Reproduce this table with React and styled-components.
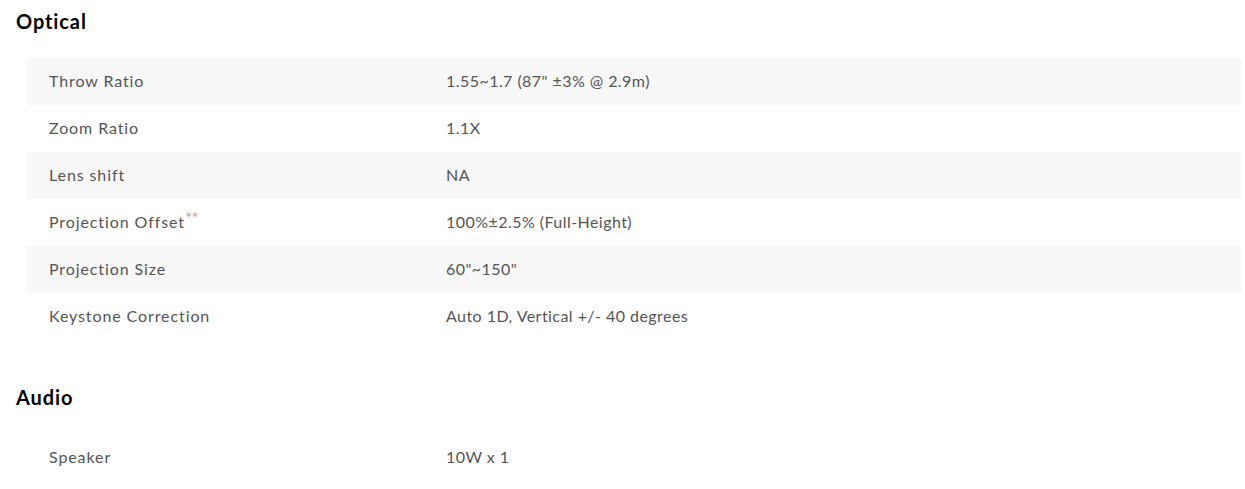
import React from 'react'
import styled, { createGlobalStyle } from 'styled-components'

const GlobalStyle = createGlobalStyle`
  html, body {
    margin: 0;
    padding: 0;
    background: #fff;
  }
  body {
    font-family: Lato, "Open Sans", "Liberation Sans", sans-serif;
  }
`

const Page = styled.div`
  padding: 8px 4px 0 16px;
`

const Section = styled.section`
  & + & {
    margin-top: 44px;
  }
`

const Heading = styled.h3`
  margin: 0 0 24px;
  font-size: 20px;
  line-height: 26px;
  font-weight: 700;
  color: #000;
  letter-spacing: 0.9px;
`

const SpecTable = styled.div`
  margin-left: 11px;
  display: flex;
  flex-direction: column;
`

const Row = styled.div`
  display: grid;
  grid-template-columns: 397px 1fr;
  height: 47px;
  align-items: center;
  padding: 0 0 3px 22px;
  box-sizing: border-box;
  background: ${p => (p.$shaded ? '#f8f8f8' : '#fff')};
  color: #555;
  font-size: 16px;
`

const Label = styled.div`
  letter-spacing: 0.9px;
`

const Value = styled.div`
  letter-spacing: 0.45px;
`

const Mark = styled.span`
  color: #b0b0b0;
  font-size: 17px;
  position: relative;
  top: -3px;
  letter-spacing: -1px;
`

const optical = [
  ['Throw Ratio', '1.55~1.7 (87" ±3% @ 2.9m)'],
  ['Zoom Ratio', '1.1X'],
  ['Lens shift', 'NA'],
  ['Projection Offset', '100%±2.5% (Full-Height)', '**'],
  ['Projection Size', '60"~150"'],
  ['Keystone Correction', 'Auto 1D, Vertical +/- 40 degrees'],
]

const audio = [['Speaker', '10W x 1']]

const Specs = ({ title, rows, striped }) => (
  <Section>
    <Heading>{title}</Heading>
    <SpecTable>
      {rows.map(([label, value, mark], i) => (
        <Row key={label} $shaded={striped && i % 2 === 0}>
          <Label>
            {label}
            {mark && <Mark>{mark}</Mark>}
          </Label>
          <Value>{value}</Value>
        </Row>
      ))}
    </SpecTable>
  </Section>
)

export default function App() {
  return (
    <Page>
      <GlobalStyle />
      <Specs title="Optical" rows={optical} striped />
      <Specs title="Audio" rows={audio} />
    </Page>
  )
}
